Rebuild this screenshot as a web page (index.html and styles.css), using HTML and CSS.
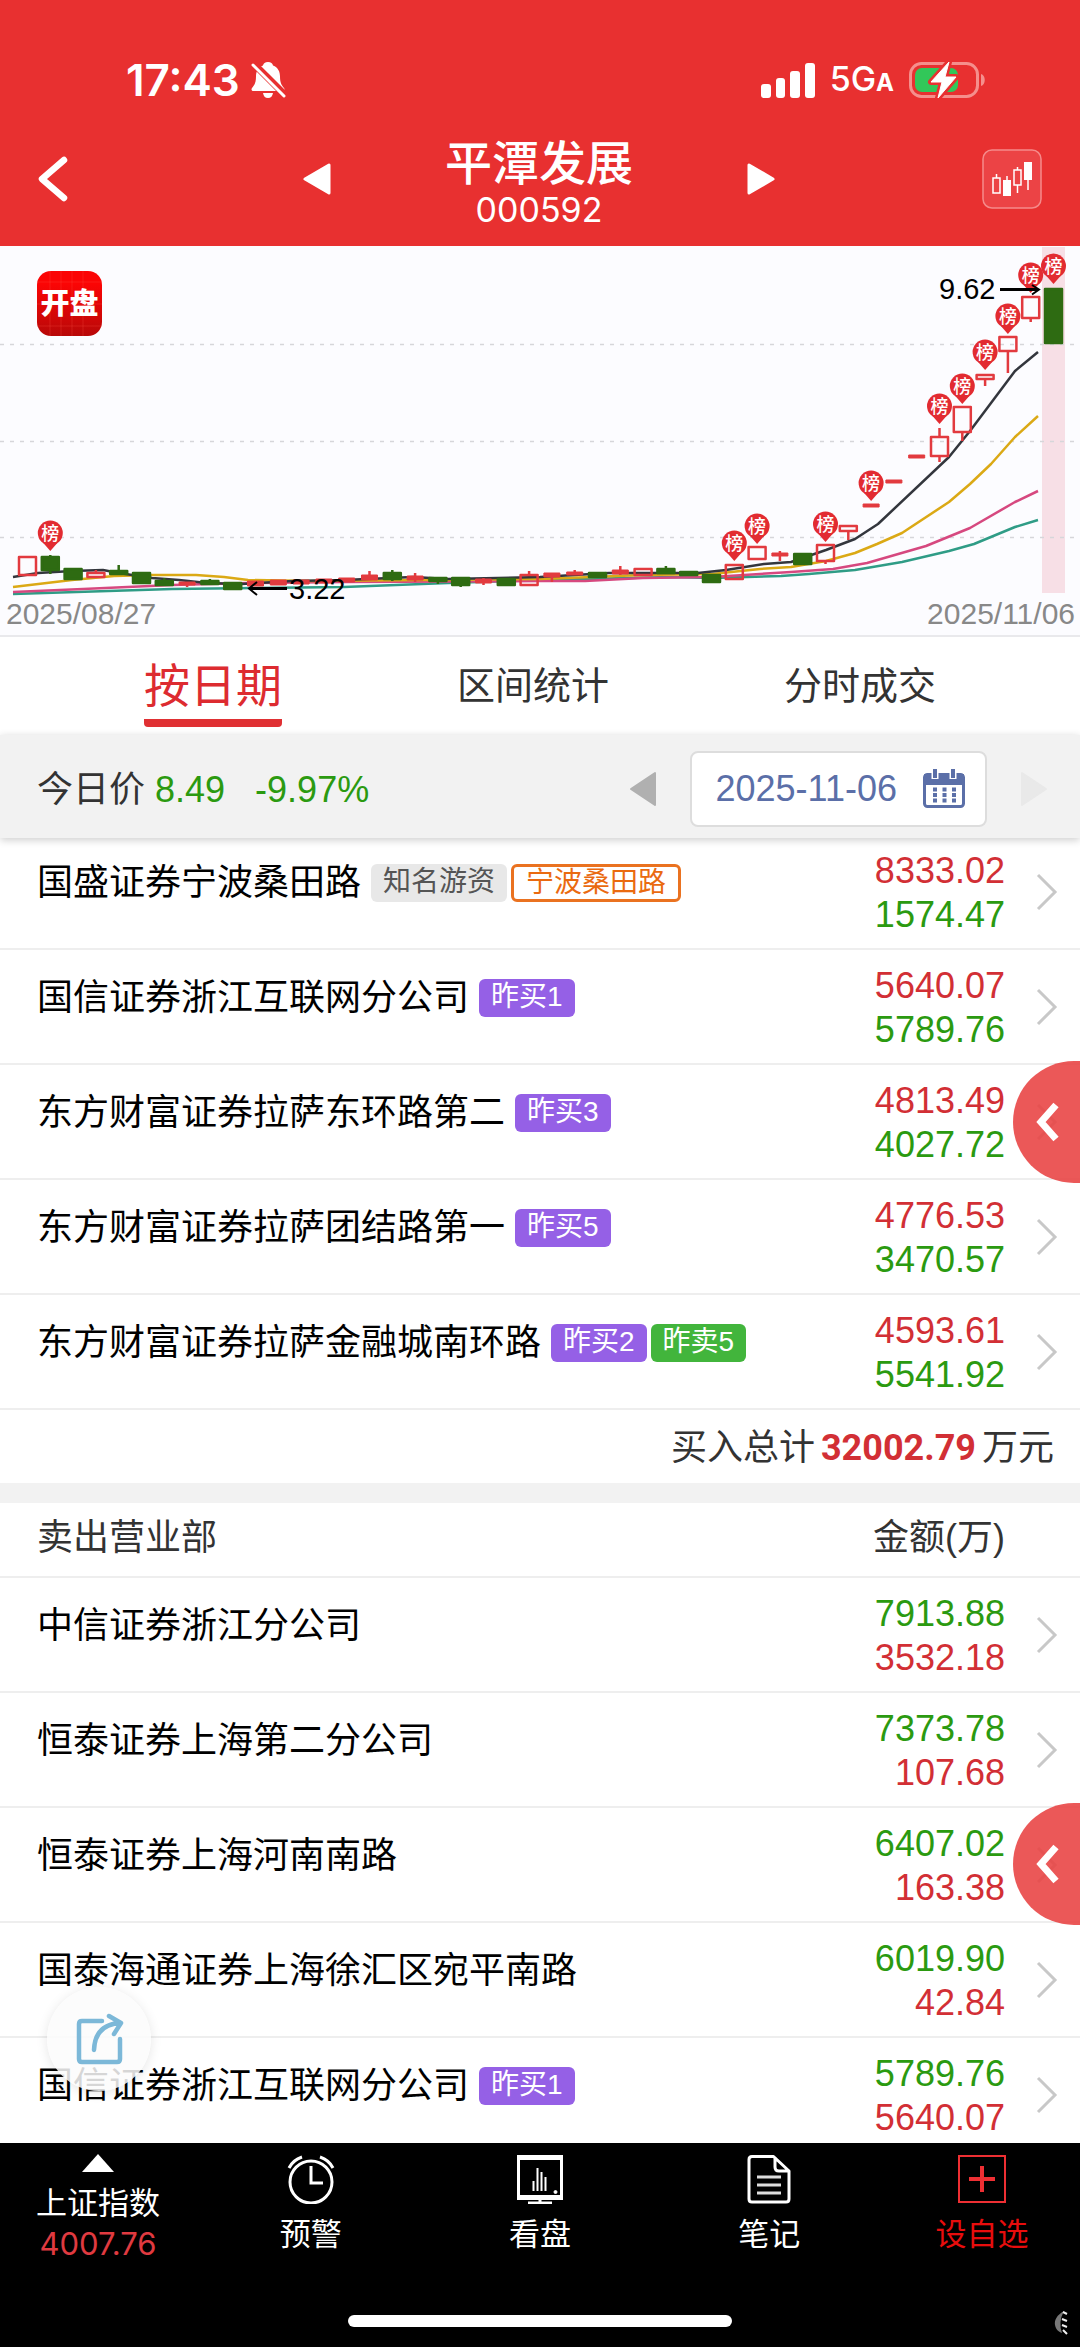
FILE: index.html
```
<!DOCTYPE html>
<html lang="zh-CN">
<head>
<meta charset="utf-8">
<meta name="viewport" content="width=device-width, initial-scale=1">
<title>平潭发展 000592</title>
<link rel="stylesheet" href="styles.css">
</head>
<body>
<div class="app">
  <header class="top">
    <div class="status">
      <div class="status-side">
        <span class="clock">17:43</span>
        <svg class="bell" width="36" height="38" viewBox="0 0 36 38" aria-hidden="true">
          <path fill="#fff" d="M18 1c3 0 4.500 1.500 5 3.500 5 2 7 6 7 11 0 6 1.500 8.500 4 11.500 1 1.500.5 3-1.500 3H3.500c-2 0-2.500-1.500-1.500-3 2.500-3 4-5.500 4-11.500 0-5 2-9 7-11C13.500 2.500 15 1 18 1zM13 32h10c-.5 3-2 5-5 5s-4.500-2-5-5z"/>
          <path stroke="#e83030" stroke-width="7" d="M1 0l34 34"/>
          <path stroke="#fff" stroke-width="3" stroke-linecap="round" d="M3 4l31 31"/>
        </svg>
      </div>
      <div class="status-side">
        <svg width="54" height="35" viewBox="0 0 54 35" fill="#fff" aria-hidden="true">
          <rect y="21" width="10" height="14" rx="3"/><rect x="15" y="15" width="9" height="20" rx="3"/><rect x="29" y="8" width="10" height="27" rx="3"/><rect x="44" y="0" width="10" height="35" rx="3"/>
        </svg>
        <span class="network">5G<small>A</small></span>
        <svg width="77" height="38" viewBox="0 0 77 38" aria-hidden="true">
          <rect x="1.500" y="2.500" width="67" height="33" rx="11" fill="none" stroke="#f58f8c" stroke-width="3"/>
          <rect x="6" y="7" width="43" height="24" rx="7" fill="#32c759"/>
          <path fill="#f58f8c" d="M72 13c5 1 5 11 0 12z"/>
          <path fill="#fff" stroke="#e83030" stroke-width="6" stroke-linejoin="round" d="M40 1L22 21h11l-4 16 18-21H36z"/>
          <path fill="#fff" stroke="#fff" stroke-width="1" stroke-linejoin="round" d="M40 1L22 21h11l-4 16 18-21H36z"/>
        </svg>
      </div>
    </div>
    <nav class="titlebar" aria-label="股票切换">
      <button class="plain back" type="button" aria-label="返回"><svg width="34" height="48" viewBox="0 0 34 48"><path d="M28 5L6 24l22 19" fill="none" stroke="#fff" stroke-width="6.500" stroke-linecap="round" stroke-linejoin="round"/></svg></button>
      <div class="stock">
        <button class="plain" type="button" aria-label="上一只"><svg width="28" height="32" viewBox="0 0 28 32"><path d="M2 16L26 2v28z" fill="#fff" stroke="#fff" stroke-width="3" stroke-linejoin="round"/></svg></button>
        <div class="stock-name"><h1>平潭发展</h1><p>000592</p></div>
        <button class="plain" type="button" aria-label="下一只"><svg width="28" height="32" viewBox="0 0 28 32"><path d="M26 16L2 2v28z" fill="#fff" stroke="#fff" stroke-width="3" stroke-linejoin="round"/></svg></button>
      </div>
      <button class="plain kline" type="button" aria-label="K线"><svg width="60" height="60" viewBox="0 0 60 60"><rect x="1" y="1" width="58" height="58" rx="9" fill="#ec4345" stroke="#f58a8a" stroke-width="1.500"/><g fill="none" stroke="#fff" stroke-width="1.500"><path d="M11 29h7v15h-7zM14.500 25v4M25 27v4M32 21h7v15h-7zM35.500 18v3M35.500 36v8M46 30v11"/></g><path fill="#fff" d="M21 31h8v16h-8zM42 13h8v18h-8z"/></svg></button>
    </nav>
  </header>

  <section class="chart" aria-label="日K线图">
    <svg viewBox="0 246 1080 389" id="kline" role="img" aria-label="2025/08/27 至 2025/11/06 K线">
      <defs>
        <linearGradient id="logoFill" x2="0" y2="1"><stop offset="0.200" stop-color="#fb0505"/><stop offset="1" stop-color="#b80808"/></linearGradient>
      </defs>
      <rect x="1042" y="247" width="23" height="346" fill="#f7dfe6"/>
      <path d="M0 344.500H1080M0 441.500H1080M0 537.500H1080" stroke="#d6d6da" stroke-width="1.500" stroke-dasharray="4 6"/>
      <rect x="37" y="271" width="65" height="65" rx="14" fill="url(#logoFill)"/>
      <path d="M50 271v65M61 271v65M72 271v65M83 271v65M37 282h65M37 304h65M37 326h65" stroke="#ff5a4a" stroke-opacity=".25"/>
      <text class="logo-text" x="69.500" y="314" text-anchor="middle">开盘</text>
      <g id="averages" fill="none" stroke-width="2.500" stroke-linejoin="round"></g>
      <g id="candles"></g>
      <g id="pins"></g>
      <g stroke="#000" fill="none"><path d="M250 588.500h37M1000 289.500h38" stroke-width="3"/><path d="M257 582l-8 6.500 8 6.500M1032 285l7 4.500-7 5" stroke-width="2"/></g>
      <text class="price" x="289" y="599">3.22</text>
      <text class="price" x="939" y="299">9.62</text>
      <text class="date" x="6" y="624">2025/08/27</text>
      <text class="date" x="1075" y="624" text-anchor="end">2025/11/06</text>
    </svg>
  </section>

  <nav class="tabs" aria-label="数据视图">
    <a class="tab current" href="#date" aria-current="page">按日期</a>
    <a class="tab" href="#range">区间统计</a>
    <a class="tab" href="#ticks">分时成交</a>
  </nav>

  <div class="daybar">
    <p class="quote">今日价 <b>8.49</b><b>-9.97%</b></p>
    <div class="picker">
      <button class="plain" type="button" aria-label="前一天"><svg width="28" height="36" viewBox="0 0 28 36"><path d="M2 18L26 2v32z" fill="#b0b0b0" stroke="#b0b0b0" stroke-width="2" stroke-linejoin="round"/></svg></button>
      <button class="date-button" type="button">2025-11-06
        <svg width="42" height="40" viewBox="0 0 42 40" aria-hidden="true"><rect x="1.500" y="5.500" width="39" height="32" rx="3" fill="#fff" stroke="#5b6fa8" stroke-width="3"/><path fill="#5b6fa8" d="M1 5h40v11H1z"/><path stroke="#fff" stroke-width="7" d="M12 3v7M30 3v7"/><path stroke="#5b6fa8" stroke-width="4" d="M12 0v9M30 0v9"/><path stroke="#5b6fa8" stroke-width="4" stroke-dasharray="4 5.500" d="M10 20.500h24M10 26h24M10 31.500h24"/></svg>
      </button>
      <button class="plain" type="button" aria-label="后一天" disabled><svg width="28" height="36" viewBox="0 0 28 36"><path d="M26 18L2 2v32z" fill="#e9e9e9" stroke="#e9e9e9" stroke-width="2" stroke-linejoin="round"/></svg></button>
    </div>
  </div>

  <main class="lists">
    <table class="seats buy" aria-label="买入营业部">
      <tbody>
        <tr><td class="name"><div><a href="#s1">国盛证券宁波桑田路</a><span class="tag gray">知名游资</span><span class="tag orange">宁波桑田路</span></div></td><td class="amount"><span>8333.02</span><span>1574.47</span></td><td class="go"><svg width="22" height="38" viewBox="0 0 22 38"><path d="M2 2l17 17L2 36"/></svg></td></tr>
        <tr><td class="name"><div><a href="#s2">国信证券浙江互联网分公司</a><span class="tag purple">昨买1</span></div></td><td class="amount"><span>5640.07</span><span>5789.76</span></td><td class="go"><svg width="22" height="38" viewBox="0 0 22 38"><path d="M2 2l17 17L2 36"/></svg></td></tr>
        <tr><td class="name"><div><a href="#s3">东方财富证券拉萨东环路第二</a><span class="tag purple">昨买3</span></div></td><td class="amount"><span>4813.49</span><span>4027.72</span></td><td class="go"><svg width="22" height="38" viewBox="0 0 22 38"><path d="M2 2l17 17L2 36"/></svg></td></tr>
        <tr><td class="name"><div><a href="#s4">东方财富证券拉萨团结路第一</a><span class="tag purple">昨买5</span></div></td><td class="amount"><span>4776.53</span><span>3470.57</span></td><td class="go"><svg width="22" height="38" viewBox="0 0 22 38"><path d="M2 2l17 17L2 36"/></svg></td></tr>
        <tr><td class="name"><div><a href="#s5">东方财富证券拉萨金融城南环路</a><span class="tag purple">昨买2</span><span class="tag green">昨卖5</span></div></td><td class="amount"><span>4593.61</span><span>5541.92</span></td><td class="go"><svg width="22" height="38" viewBox="0 0 22 38"><path d="M2 2l17 17L2 36"/></svg></td></tr>
      </tbody>
    </table>
    <p class="total">买入总计<strong>32002.79</strong>万元</p>
    <table class="seats sell">
      <thead><tr><th class="name" scope="col">卖出营业部</th><th class="amount" scope="col">金额(万)</th><td class="go"></td></tr></thead>
      <tbody>
        <tr><td class="name"><div><a href="#s6">中信证券浙江分公司</a></div></td><td class="amount"><span>7913.88</span><span>3532.18</span></td><td class="go"><svg width="22" height="38" viewBox="0 0 22 38"><path d="M2 2l17 17L2 36"/></svg></td></tr>
        <tr><td class="name"><div><a href="#s7">恒泰证券上海第二分公司</a></div></td><td class="amount"><span>7373.78</span><span>107.68</span></td><td class="go"><svg width="22" height="38" viewBox="0 0 22 38"><path d="M2 2l17 17L2 36"/></svg></td></tr>
        <tr><td class="name"><div><a href="#s8">恒泰证券上海河南南路</a></div></td><td class="amount"><span>6407.02</span><span>163.38</span></td><td class="go"><svg width="22" height="38" viewBox="0 0 22 38"><path d="M2 2l17 17L2 36"/></svg></td></tr>
        <tr><td class="name"><div><a href="#s9">国泰海通证券上海徐汇区宛平南路</a></div></td><td class="amount"><span>6019.90</span><span>42.84</span></td><td class="go"><svg width="22" height="38" viewBox="0 0 22 38"><path d="M2 2l17 17L2 36"/></svg></td></tr>
        <tr><td class="name"><div><a href="#s10">国信证券浙江互联网分公司</a><span class="tag purple">昨买1</span></div></td><td class="amount"><span>5789.76</span><span>5640.07</span></td><td class="go"><svg width="22" height="38" viewBox="0 0 22 38"><path d="M2 2l17 17L2 36"/></svg></td></tr>
      </tbody>
    </table>
  </main>

  <footer class="bottom">
    <nav class="menu" aria-label="工具栏">
      <a class="item index" href="#index"><svg width="32" height="18" viewBox="0 0 32 18"><path d="M16 0l16 18H0z" fill="#fff"/></svg><span>上证指数</span><span class="points">4007.76</span></a>
      <a class="item" href="#alert"><svg width="48" height="50" viewBox="0 0 48 50" fill="none" stroke="#fff" stroke-width="3"><circle cx="24" cy="28" r="21"/><path d="M24 12v17h12M2 14q4-8 13-11M46 14q-4-8-13-11"/></svg><span>预警</span></a>
      <a class="item" href="#watch"><svg width="48" height="50" viewBox="0 0 48 50" fill="none" stroke="#fff"><path stroke-width="3" d="M2.500 3v41h43V3"/><path stroke-width="5" d="M1 3.500h46M1 43.500h46"/><path stroke-width="3" d="M12 49h24M24 44v5"/><path stroke-width="2" d="M17.500 27v10M21.500 14v23M25.500 18v19M29.500 23v14"/><circle cx="39.500" cy="38" r="1.500" fill="#fff"/></svg><span>看盘</span></a>
      <a class="item" href="#notes"><svg width="48" height="50" viewBox="0 0 48 50" fill="none" stroke="#fff" stroke-width="3"><path stroke-linejoin="round" d="M7 2.500h21.500L44 17v28q0 3-3 3H7q-3 0-3-3v-39.500q0-3 3-3zM30 3v10q0 4 4 4h10"/><path d="M12 23h24M12 31h24M12 39h24" stroke="#ddd"/></svg><span>笔记</span></a>
      <a class="item add" href="#add"><svg width="48" height="50" viewBox="0 0 48 50" fill="none" stroke="#ee2f33"><path stroke-width="2" d="M1 2h46v46H1z"/><path stroke-width="4" d="M11 25h26M24 12v26"/></svg><span>设自选</span></a>
    </nav>
    <div class="home"></div>
    <svg class="mark" width="14" height="24" viewBox="0 0 14 24" aria-hidden="true"><path d="M10 0C3 4 0 9 1 14s4 7 7 8q-4-11 2-22z" fill="#777"/><path d="M9 1l4 2M8 8l5 2M8 14l5 2M9 19l4 4" stroke="#eee" stroke-width="2"/></svg>
  </footer>

  <button class="drawer upper" type="button" aria-label="展开买入"><svg width="26" height="40" viewBox="0 0 26 40"><path d="M21 3L6 20l15 17"/></svg></button>
  <button class="drawer lower" type="button" aria-label="展开卖出"><svg width="26" height="40" viewBox="0 0 26 40"><path d="M21 3L6 20l15 17"/></svg></button>
  <button class="share" type="button" aria-label="分享"><svg width="48" height="52" viewBox="0 0 48 52" fill="none" stroke="#7cb8d8" stroke-width="4.500" stroke-linecap="round" stroke-linejoin="round"><path d="M26 8H6q-3 0-3 3v35q0 3 3 3h35q3 0 3-3V26"/><path d="M18 37Q19 11 45 10M33 3l12 7-7 11"/></svg></button>
</div>
<script src="chart.js"></script>
</body>
</html>
```
FILE: styles.css
```
* { box-sizing: border-box; }

body {
  margin: 0;
  background: #fff;
  color: #333;
  font-family: "Liberation Sans", "Noto Sans CJK SC", sans-serif;
  font-size: 36px;
}

h1, p { margin: 0; }
a { color: inherit; text-decoration: none; }
svg { display: block; }
button { font: inherit; color: inherit; cursor: pointer; }
.plain { padding: 0; border: 0; background: none; }

.app {
  position: relative;
  display: flex;
  flex-direction: column;
  height: 100vh;
  overflow: hidden;
}

/* Header */
.top { flex: none; background: #e83030; color: #fff; padding-top: 56px; }
.status {
  display: flex;
  justify-content: space-between;
  height: 48px;
  padding: 0 94px 0 126px;
}
.status-side { display: flex; align-items: center; gap: 10px; }
.status-side + .status-side { gap: 15px; }
.clock { font: 600 44px/48px Inter, sans-serif; }
.network { padding-top: 2px; font: 500 34px/48px Inter, sans-serif; }
.network small { font-size: 24px; font-weight: 700; }

.titlebar {
  display: grid;
  grid-template-columns: 1fr auto 1fr;
  align-items: center;
  height: 142px;
  padding: 8px 38px 0 36px;
}
.kline { justify-self: end; }
.back { justify-self: start; }
.stock { display: flex; align-items: center; gap: 114px; }
.stock-name { padding-top: 10px; text-align: center; }
.stock-name h1 { font-size: 47px; line-height: 52px; font-weight: 500; }
.stock-name p { font: 34px/40px Inter, sans-serif; }

/* Chart */
.chart { flex: none; background: #fcfcff; border-bottom: 2px solid #e9e9ec; }
.chart svg { width: 100%; }
.price { font-size: 29px; fill: #000; }
.date { font-size: 30px; fill: #888; }
.logo-text { font-size: 29px; font-weight: 900; fill: #fff; }
.pin-text { font-size: 18px; font-weight: 500; fill: #fff; text-anchor: middle; }

/* Tabs */
.tabs {
  flex: none;
  display: flex;
  justify-content: space-between;
  height: 98px;
  padding: 0 144px;
}
.tab { font-size: 38px; line-height: 98px; }
.tab.current {
  height: 90px;
  border-bottom: 8px solid #e03033;
  border-radius: 4px;
  color: #dd2b30;
  font-size: 46px;
}

/* Day bar */
.daybar {
  flex: none;
  position: relative;
  z-index: 1;
  display: flex;
  align-items: center;
  justify-content: space-between;
  height: 103px;
  padding: 4px 32px 0 37px;
  background: #f2f2f2;
  box-shadow: 0 2px 8px rgba(0, 0, 0, .2);
}
.quote { padding-bottom: 6px; }
.quote b { font-weight: 400; color: #2b9a10; }
.quote b + b { margin-left: 30px; }
.picker { display: flex; align-items: center; gap: 33px; }
.date-button {
  display: flex;
  align-items: center;
  gap: 26px;
  height: 76px;
  padding: 0 20px 0 24px;
  border: 2px solid #ddd;
  border-radius: 8px;
  background: #fff;
  color: #5b6fa8;
}

/* Broker lists */
.lists { flex: 1; min-height: 0; margin-top: -3px; overflow: auto; scrollbar-width: none; }
.seats { width: 100%; border-spacing: 0; table-layout: fixed; }
.seats td, .seats th { padding: 0; border-bottom: 2px solid #eee; font-weight: 400; }
.seats tbody td { height: 115px; }
.seats thead th { height: 75px; line-height: 70px; }
.seats .name { padding-left: 37px; text-align: left; vertical-align: top; }
.seats .amount { width: 180px; text-align: right; vertical-align: top; }
.seats tbody .amount { padding-top: 14px; }
.seats .amount span { display: block; line-height: 44px; }
.seats .go { width: 75px; padding-left: 31px; }
.go path { fill: none; stroke: #c8c8c8; stroke-width: 3; }
.name div { display: flex; align-items: center; gap: 4px; padding-top: 28px; line-height: 40px; color: #000; }
.name a { margin-right: 6px; white-space: nowrap; }
.buy .amount span:first-child, .sell .amount span:last-child { color: #d22f35; }
.buy .amount span:last-child, .sell .amount span:first-child { color: #2b9a10; }

.tag {
  height: 38px;
  padding: 0 12px;
  border-radius: 6px;
  color: #fff;
  font-size: 28px;
  line-height: 36px;
  white-space: nowrap;
}
.tag.purple { background: #9560e6; }
.tag.green { background: #42b53c; }
.tag.gray { background: #e8e8e8; color: #555; }
.tag.orange { border: 3px solid #ea7220; color: #ea6a10; line-height: 32px; background: #fff; }

.total {
  height: 93px;
  padding-right: 26px;
  border-bottom: 20px solid #f2f2f2;
  line-height: 76px;
  text-align: right;
}
.total strong { margin: 0 6px; color: #d22f35; font-family: Roboto, sans-serif; font-weight: 700; }

/* Bottom menu */
.bottom {
  flex: none;
  position: relative;
  z-index: 1;
  height: 204px;
  padding-top: 11px;
  background: #000;
  color: #fff;
}
.menu { display: grid; grid-template-columns: 196px 1fr 1fr 1fr 196px; height: 161px; }
.item { display: flex; flex-direction: column; align-items: center; font-size: 31px; line-height: 40px; }
.item svg + span { margin-top: 11px; }
.index svg + span { margin-top: 12px; }
.item .points { color: #e03a40; font-family: Inter, sans-serif; }
.add span { color: #e80d0d; }
.home { width: 384px; height: 12px; margin: 0 auto; border-radius: 6px; background: #fff; }
.mark { position: absolute; right: 12px; bottom: 12px; }

/* Floating buttons */
.drawer {
  position: absolute;
  right: 0;
  width: 67px;
  height: 122px;
  padding: 0 0 0 22px;
  border: 0;
  border-radius: 61px 0 0 61px;
  background: rgba(232, 65, 65, .88);
}
.drawer path { fill: none; stroke: #fff; stroke-width: 7; }
.drawer.upper { top: 1061px; }
.drawer.lower { top: 1803px; }
.share {
  position: absolute;
  left: 47px;
  bottom: 256px;
  width: 104px;
  height: 104px;
  padding: 0 0 0 29px;
  border: 0;
  border-radius: 50%;
  background: rgba(251, 251, 251, .85);
  box-shadow: 0 2px 12px rgba(0, 0, 0, .1);
}
```
FILE: chart.js
```
const RED = '#e23a3f';
const GREEN = '#2e6b12';
const STEP = 22.8;
const FIRST = 27.5;
const x = (i) => FIRST + STEP * i;

// kind: h hollow rise, r filled rise, g fall; then body top, body bottom, wick top, wick bottom
const candles = [
  ['h', 557, 575], ['g', 557, 570, 555, 574], ['g', 569, 579], ['h', 573, 577, 570, 577], ['g', 571, 574, 565, 574],
  ['g', 573, 583], ['g', 581, 585, 578, 586], ['r', 582, 585, 582, 587], ['g', 581, 584, 579, 584], ['g', 583, 589],
  ['r', 581, 586], ['r', 580, 585], ['r', 580, 584], ['r', 579, 583], ['r', 578, 582],
  ['r', 575, 580, 571, 580], ['g', 573, 579, 570, 581], ['r', 576, 580, 573, 582], ['g', 578, 581, 578, 584], ['g', 578, 585, 578, 587],
  ['r', 579, 583, 578, 585], ['g', 579, 585], ['h', 575, 585, 571, 585], ['r', 573, 577, 573, 582], ['r', 572, 575, 570, 575],
  ['g', 573, 577], ['r', 570, 574, 566, 575], ['h', 569, 575], ['g', 569, 573, 566, 573], ['g', 572, 575],
  ['g', 575, 582], ['h', 565, 579], ['h', 547, 559], ['r', 553, 556, 551, 561], ['g', 554, 564],
  ['h', 545, 561, 545, 564], ['h', 526, 531, 526, 540], ['r', 504, 507], ['r', 480, 483], ['r', 455, 458],
  ['h', 437, 456, 428, 462], ['h', 407, 432, 407, 441], ['h', 375, 379, 375, 386], ['h', 337, 351, 337, 373], ['h', 297, 318, 297, 322],
  ['g', 289, 343],
];

document.getElementById('candles').innerHTML = candles.map(([kind, top, bottom, high, low], i) => {
  const color = kind === 'g' ? GREEN : RED;
  const fill = kind === 'h' ? 'none' : color;
  const wicks = high ? `M${x(i)} ${high}V${top}M${x(i)} ${bottom}V${low}` : '';
  const wick = wicks ? `<path d="${wicks}" stroke="${color}" stroke-width="2.5"/>` : '';
  const w = kind === 'r' ? 16 : 17;
  return `${wick}<rect x="${x(i) - w / 2}" y="${top}" width="${w}" height="${bottom - top}" fill="${fill}" stroke="${color}" stroke-width="${kind === 'r' ? 1 : 2.5}" stroke-linejoin="round"/>`;
}).join('');

const averages = [
  ['#2f9c86', '13,594 172,589 344,587 448,583 540,580 671,577 712,578 781,576 809,574 855,570 902,562 949,551 974,544 1015,527 1038,520'],
  ['#d6487f', '13,592 83,589 172,585 248,583 344,582 540,581 585,581 643,578 712,577 760,574 791,572 833,569 867,563 926,546 970,528 1015,502 1038,491'],
  ['#dba915', '13,587 72,580 114,576 152,575 196,575 224,577 248,580 310,581 540,579 643,575 712,574 760,569 791,567 826,561 855,553 877,544 902,533 949,502 970,484 991,464 1015,437 1038,416'],
  ['#33363d', '13,577 38,573 72,571 103,570 119,573 152,578 179,580 207,583 241,584 293,581 344,580 413,577 448,579 540,577 609,573 643,573 698,573 726,570 764,564 791,562 826,550 855,539 878,524 949,457 970,431 1015,371 1038,352'],
];
document.getElementById('averages').innerHTML = averages
  .map(([color, points]) => `<polyline points="${points}" stroke="${color}"/>`).join('');

// candle index and centre height of each ranking-list pin
const pins = [[1, 533], [31, 543], [32, 526], [35, 524], [37, 483], [40, 406], [41, 386], [42, 352], [43, 316], [44, 275], [45, 266]];
document.getElementById('pins').innerHTML = pins.map(([i, y]) =>
  `<circle cx="${x(i)}" cy="${y}" r="12.5" fill="#e22b31"/><path d="M${x(i)} ${y + 18}l-7-8h14z" fill="#e22b31"/><text class="pin-text" x="${x(i)}" y="${y + 7}">榜</text>`).join('');
```
